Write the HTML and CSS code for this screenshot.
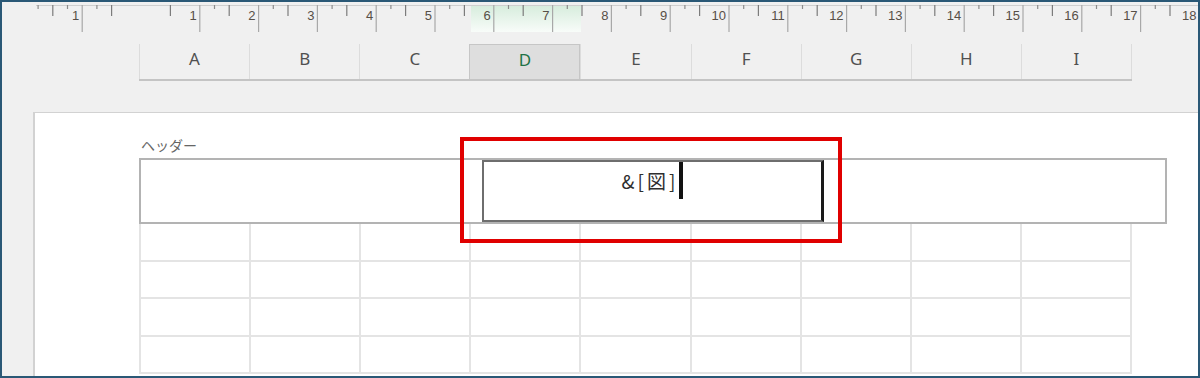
FILE: index.html
```html
<!DOCTYPE html>
<html lang="ja">
<head>
  <meta charset="UTF-8">
  <title>ページレイアウト - ヘッダー</title>
  <link rel="stylesheet" href="styles.css">
</head>
<body>
  <div class="window">
    <svg class="ruler" id="ruler" width="1196" height="32" viewBox="2 2 1196 32">
      <defs>
        <linearGradient id="sel" x1="0" y1="0" x2="0" y2="1">
          <stop offset="0" stop-color="#d6ecdc"/>
          <stop offset="1" stop-color="#f8fcf9"/>
        </linearGradient>
      </defs>
      <rect x="471" y="5" width="110" height="27" fill="url(#sel)"/>
      <line x1="36" y1="5.5" x2="1198" y2="5.5" stroke="#cfcfcf" stroke-width="1"/>
    </svg>

    <div class="colheads">
      <div class="colhead">A</div>
      <div class="colhead">B</div>
      <div class="colhead">C</div>
      <div class="colhead active">D</div>
      <div class="colhead">E</div>
      <div class="colhead">F</div>
      <div class="colhead">G</div>
      <div class="colhead">H</div>
      <div class="colhead">I</div>
    </div>

    <div class="sheet">
      <div class="gutter"></div>
      <div class="page">
        <div class="header-label">ヘッダー</div>
        <div class="header-box">
          <div class="header-section"></div>
          <div class="header-section center">
            <span class="code">&amp;[図]</span><span class="caret"></span>
          </div>
          <div class="header-section right"></div>
          <div class="highlight"></div>
        </div>
        <div class="cells" id="cells"></div>
      </div>
    </div>
  </div>

  <script src="script.js"></script>
</body>
</html>
```

FILE: styles.css
```css
body {
  margin: 0;
  background: #fff;
  font-family: "Noto Sans", sans-serif;
}

.window {
  width: 1200px;
  height: 378px;
  box-sizing: border-box;
  border: 2px solid #2a5876;
  background: #f0f0f0;
  display: flex;
  flex-direction: column;
  overflow: hidden;
}

.ruler {
  display: block;
  flex-shrink: 0;
}

.ruler text {
  font-family: "Liberation Sans", sans-serif;
  font-size: 13px;
  fill: #574f47;
}

.colheads {
  display: flex;
  flex-shrink: 0;
  width: 993px;
  height: 35px;
  margin: 10px 0 0 137px;
  border-bottom: 2px solid #c4c4c4;
}

.colhead {
  flex: 1;
  display: flex;
  align-items: center;
  justify-content: center;
  padding-bottom: 6px;
  border-left: 1px solid #dcdcdc;
  font-size: 17px;
  color: #505050;
}

.colhead:last-child {
  border-right: 1px solid #dcdcdc;
}

.colhead.active {
  background: #dedede;
  border: 1px solid #c6c6c6;
  border-bottom: none;
  color: #217346;
}

.sheet {
  flex: 1;
  display: flex;
  min-height: 0;
  margin-top: 31px;
}

.gutter {
  width: 31px;
  flex-shrink: 0;
}

.page {
  flex: 1;
  background: #fff;
  border-left: 2px solid #d2d2d2;
  border-top: 1px solid #d2d2d2;
}

.header-label {
  margin: 22px 0 0 106px;
  font-family: "Noto Sans CJK JP", sans-serif;
  font-size: 14px;
  line-height: 20px;
  color: #666;
}

.header-box {
  position: relative;
  z-index: 1;
  display: flex;
  width: 1028px;
  height: 66px;
  box-sizing: border-box;
  margin: 3px 0 0 104px;
  border: 2px solid #b3b3b3;
  background: #fff;
}

.header-section {
  width: 341px;
}

.header-section.right {
  flex: 1;
}

.header-section.center {
  width: 342px;
  box-sizing: border-box;
  border: 2px solid #6e6e6e;
  border-right: 3px solid #1a1a1a;
  display: flex;
  justify-content: center;
  align-items: flex-start;
}

.code {
  font-family: "Noto Sans CJK JP", sans-serif;
  font-size: 19px;
  line-height: 37px;
  letter-spacing: 3px;
  color: #2e2e2e;
}

.caret {
  width: 4px;
  height: 37px;
  margin-left: 1px;
  background: #111;
}

.highlight {
  position: absolute;
  left: 319px;
  top: -23px;
  width: 382px;
  height: 106px;
  box-sizing: border-box;
  border: 4px solid #e00000;
}

.cells {
  display: grid;
  grid-template-columns: repeat(9, 1fr);
  grid-auto-rows: 37.5px;
  width: 993px;
  box-sizing: border-box;
  margin-left: 104px;
  border-left: 2px solid #e4e4e4;
}

.cells div {
  border-right: 2px solid #e4e4e4;
  border-bottom: 2px solid #e4e4e4;
}
```

FILE: script.js
```js
const ruler = document.getElementById("ruler");
const NS = "http://www.w3.org/2000/svg";
const origin = 141;
const unit = 58.8;

function tick(x, y2, color) {
  const l = document.createElementNS(NS, "line");
  l.setAttribute("x1", x);
  l.setAttribute("x2", x);
  l.setAttribute("y1", 5);
  l.setAttribute("y2", y2);
  l.setAttribute("stroke", color);
  l.setAttribute("stroke-width", 1.2);
  ruler.appendChild(l);
}

function label(x, n) {
  const t = document.createElementNS(NS, "text");
  t.setAttribute("x", x);
  t.setAttribute("y", 20);
  t.setAttribute("text-anchor", "end");
  t.textContent = n;
  ruler.appendChild(t);
}

// left margin (counts leftwards)
tick(origin - unit, 32, "#a8a8a8");
label(origin - unit - 3, 1);
tick(origin - 0.5 * unit, 16, "#7c7c7c");
tick(origin - 1.5 * unit, 16, "#7c7c7c");
tick(origin - 0.75 * unit, 9, "#8c8c8c");
tick(origin - 1.25 * unit, 9, "#8c8c8c");
tick(origin - 1.75 * unit, 9, "#8c8c8c");

// page area
for (let n = 0; n < 18; n++) {
  const m = origin + n * unit;
  if (n > 0) tick(m + 0.25 * unit, 9, "#8c8c8c");
  tick(m + 0.5 * unit, 16, "#7c7c7c");
  tick(m + unit, 32, "#a8a8a8");
  label(m + unit - 3, n + 1);
}

// sheet grid
const cells = document.getElementById("cells");
for (let i = 0; i < 36; i++) {
  cells.appendChild(document.createElement("div"));
}
```
